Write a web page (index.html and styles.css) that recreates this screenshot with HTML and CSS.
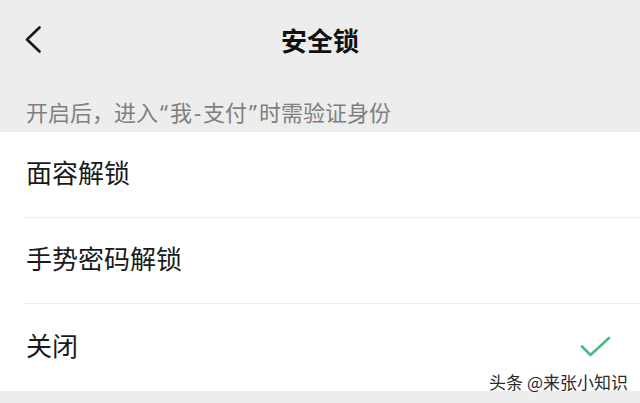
FILE: index.html
```html
<!DOCTYPE html>
<html lang="zh-CN">
<head>
    <meta charset="UTF-8">
    <meta name="viewport" content="width=device-width, initial-scale=1.0">
    <title>安全锁</title>
    <link rel="stylesheet" href="styles.css">
</head>
<body>
    <header class="nav-bar">
        <a class="back" href="#" aria-label="返回">
            <svg width="18" height="28" viewBox="0 0 18 28">
                <polyline points="15.5,1.5 3,13.5 15.5,25.5" fill="none" stroke="#1a1a1a" stroke-width="2.6" stroke-linecap="round" stroke-linejoin="round"/>
            </svg>
        </a>
        <h1 class="nav-title">安全锁</h1>
    </header>

    <p class="hint">开启后，进入<span class="punct">“</span>我<span class="punct">-</span>支付<span class="punct">”</span>时需验证身份</p>

    <!-- Lock options -->
    <ul class="options">
        <li class="option"><span>面容解锁</span></li>
        <li class="option"><span>手势密码解锁</span></li>
        <li class="option selected">
            <span>关闭</span>
            <svg class="check" width="32" height="24" viewBox="0 0 32 24">
                <polyline points="2,10.5 10.5,19 29,2" fill="none" stroke="#48bb85" stroke-width="2.6" stroke-linecap="round" stroke-linejoin="round"/>
            </svg>
        </li>
    </ul>

    <div class="watermark">头条 @来张小知识</div>
</body>
</html>
```

FILE: styles.css
```css
body {
    font-family: "Noto Sans CJK SC", "Noto Sans", sans-serif;
    background-color: #ededed;
    color: #1a1a1a;
    margin: 0;
    padding: 0;
    height: 403px;
    overflow: hidden;
    position: relative;
}
.nav-bar {
    height: 80px;
    display: flex;
    align-items: center;
    justify-content: center;
    position: relative;
}
.back {
    position: absolute;
    left: 24px;
    top: 26px;
    display: flex;
}
.nav-title {
    margin: 0;
    font-size: 26px;
    font-weight: 700;
    line-height: 30px;
    color: #111;
}
.hint {
    margin: 0;
    padding: 16px 26px 5px;
    font-size: 22px;
    line-height: 30px;
    color: #7f7f7f;
}
.hint .punct {
    font-family: "Noto Sans", sans-serif;
    padding: 0 2px;
}
.options {
    list-style: none;
    margin: 0;
    padding: 0 0 0 24px;
    background: #fff;
}
.option {
    height: 86px;
    box-sizing: border-box;
    display: flex;
    align-items: center;
    justify-content: space-between;
    padding: 0 28px 6px 2px;
    font-size: 26px;
    border-bottom: 1px solid #ececec;
}
.option:last-child {
    border-bottom: none;
    height: 87px;
}
.check {
    display: block;
    margin-top: 6px;
}
.watermark {
    position: absolute;
    right: 12px;
    top: 371px;
    font-size: 17px;
    line-height: 22px;
    color: #2a2a2a;
    text-shadow: 0 0 2px #fff, 0 0 2px #fff;
}
```
